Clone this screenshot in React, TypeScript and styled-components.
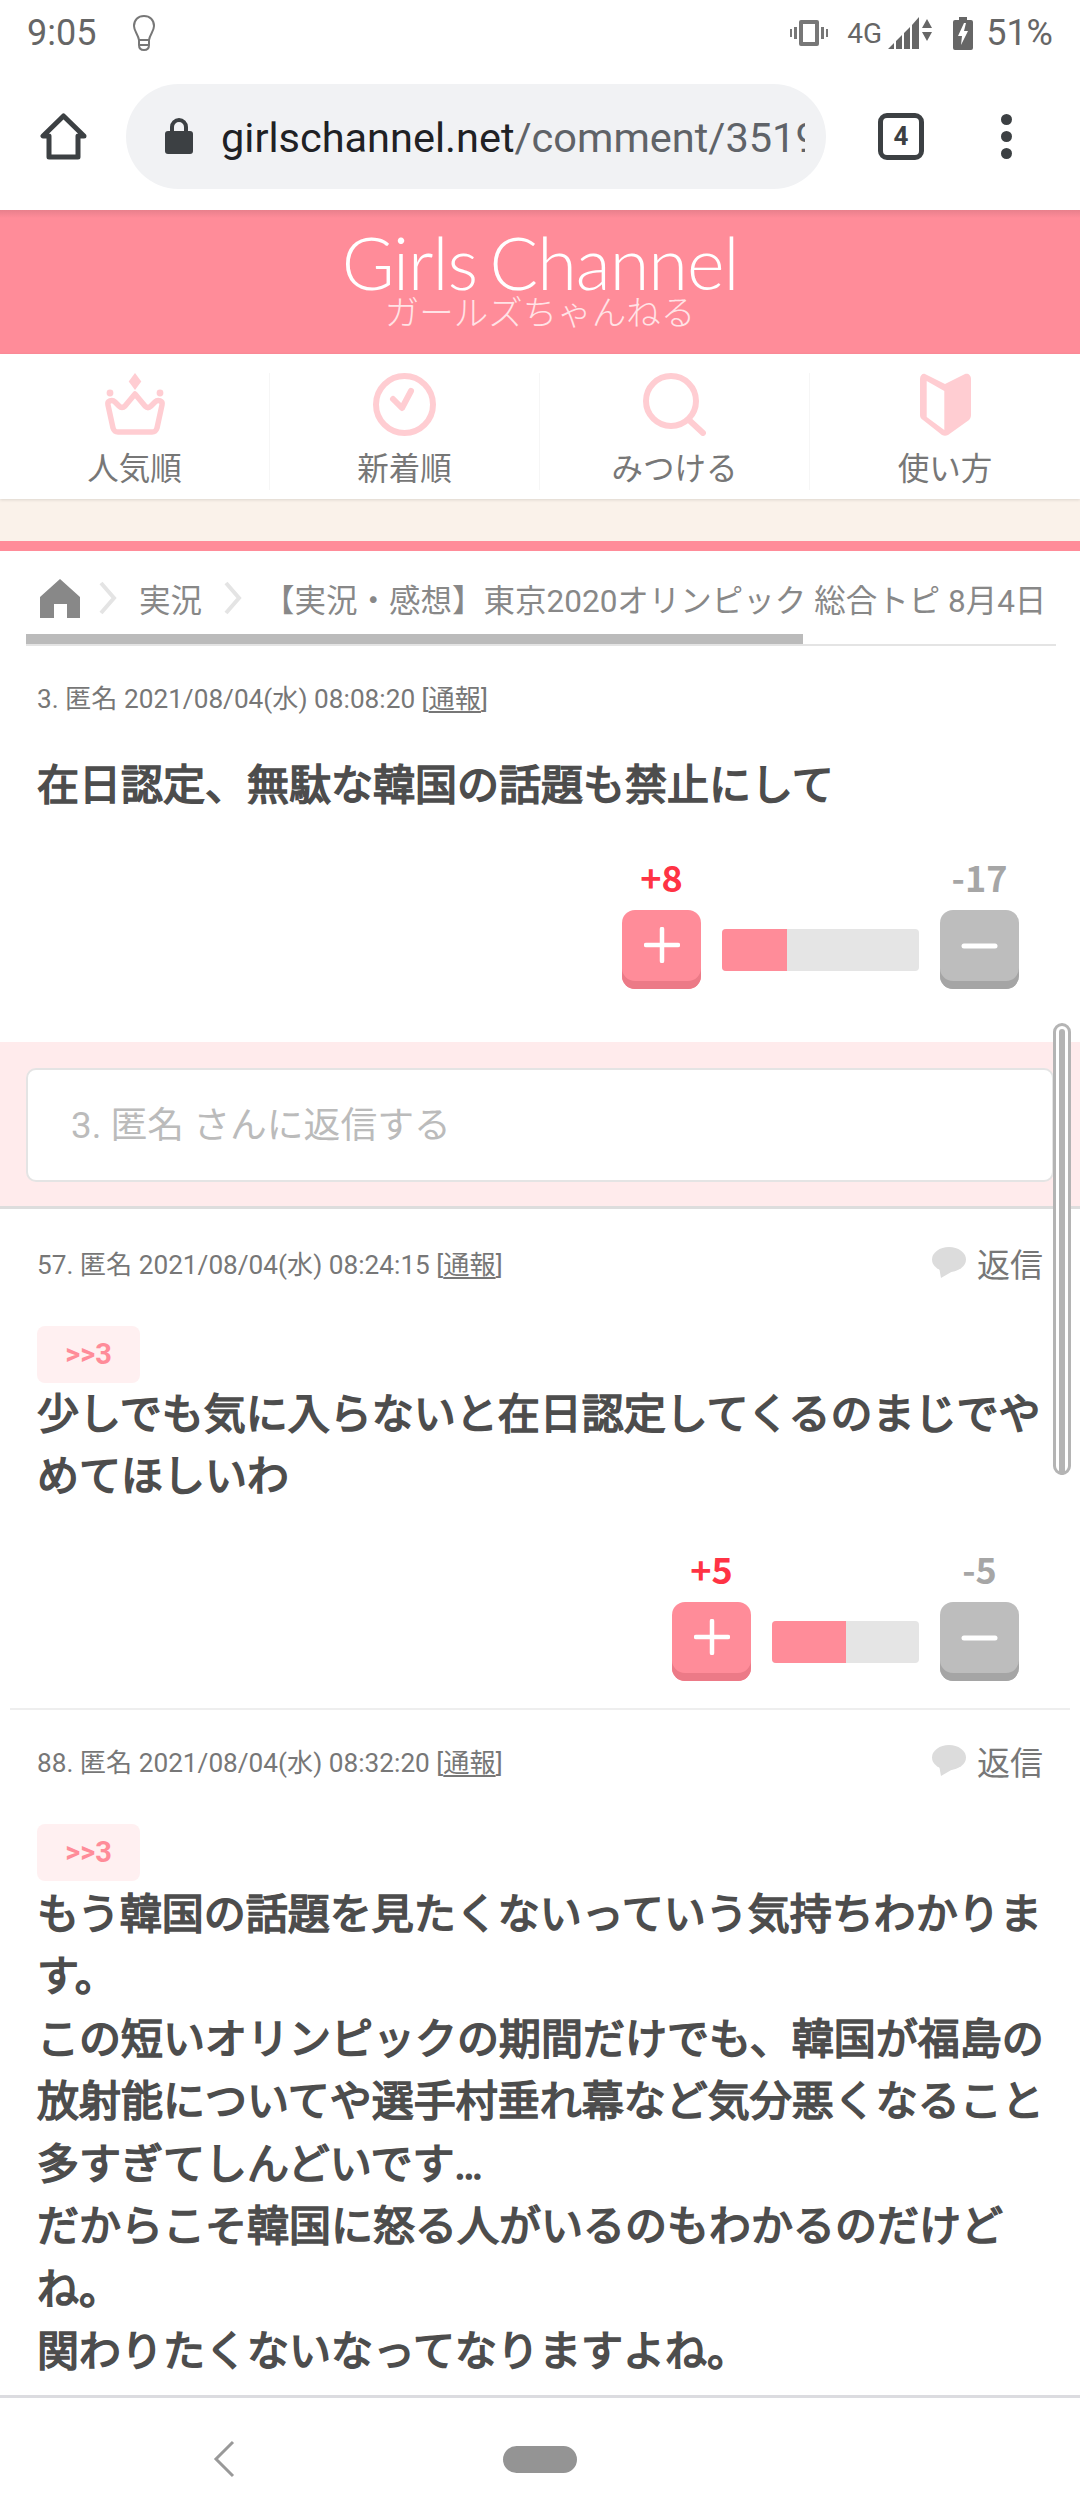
import React from 'react';
import styled, { createGlobalStyle } from 'styled-components';

const GlobalStyle = createGlobalStyle`
  html, body {
    margin: 0;
    padding: 0;
    background: #fff;
  }
  * {
    box-sizing: border-box;
  }
`;

const JP = `Roboto, "Noto Sans CJK JP", "Noto Sans", sans-serif`;
const PINK = '#ff8c99';
const ICON_PINK = '#ffcdd2';

const Shell = styled.div`
  display: flex;
  flex-direction: column;
  width: 1080px;
  height: 2520px;
  overflow: hidden;
  font-family: ${JP};
  background: #fff;
`;

const StatusBar = styled.div`
  display: flex;
  align-items: center;
  justify-content: space-between;
  height: 66px;
  padding: 0 27px 0 27px;
  color: #666;
  font-family: Roboto, sans-serif;
  font-size: 36px;
`;

const StatusGroup = styled.div`
  display: flex;
  align-items: center;
`;

const Clock = styled.span`
  margin-right: 36px;
`;

const Net = styled.span`
  margin: 0 6px 0 19px;
  font-size: 28px;
`;

const Battery = styled.span`
  margin-left: 13px;
`;

const Toolbar = styled.div`
  display: flex;
  align-items: center;
  height: 144px;
  padding: 0 0 4px 40px;
`;

const UrlPill = styled.div`
  display: flex;
  align-items: center;
  width: 700px;
  height: 105px;
  margin-left: 39px;
  padding-left: 39px;
  border-radius: 53px;
  background: #f1f2f4;
  overflow: hidden;
`;

const UrlText = styled.div`
  width: 584px;
  margin-left: 28px;
  padding-top: 3px;
  overflow: hidden;
  white-space: nowrap;
  font-family: Roboto, sans-serif;
  font-size: 41.5px;
  color: #5f6368;
  b {
    font-weight: 400;
    color: #202124;
  }
`;

const TabCount = styled.div`
  display: flex;
  align-items: center;
  justify-content: center;
  width: 46px;
  height: 47px;
  margin-left: 52px;
  border: 5px solid #3c4043;
  border-radius: 9px;
  font-family: Roboto, sans-serif;
  font-size: 26px;
  font-weight: 700;
  color: #3c4043;
`;

const Dots = styled.div`
  display: flex;
  flex-direction: column;
  gap: 6px;
  margin-left: 77px;
  i {
    display: block;
    width: 11px;
    height: 11px;
    border-radius: 50%;
    background: #3c4043;
  }
`;

const Main = styled.div`
  position: relative;
  flex: 1;
  min-height: 0;
  overflow: hidden;
`;

const Logo = styled.div`
  display: flex;
  flex-direction: column;
  align-items: center;
  height: 144px;
  padding-top: 17px;
  background: linear-gradient(#e8808c 0, ${PINK} 8px);
  color: #fff;
`;

const LogoMain = styled.div`
  font-family: Lato, sans-serif;
  font-size: 72px;
  font-weight: 300;
  line-height: 70px;
  letter-spacing: -1px;
  word-spacing: -6px;
`;

const LogoSub = styled.div`
  margin-top: -9px;
  font-family: "Noto Sans CJK JP", sans-serif;
  font-size: 34.5px;
  font-weight: 300;
  line-height: 44px;
  color: #ffe3e6;
`;

const Nav = styled.nav`
  display: grid;
  grid-template-columns: repeat(4, 270px);
  height: 145px;
  padding-top: 19px;
  box-shadow: 0 1px 3px rgba(0, 0, 0, 0.12);
  position: relative;
`;

const NavItem = styled.div<{ $last?: boolean }>`
  display: flex;
  flex-direction: column;
  align-items: center;
  height: 117px;
  border-right: ${(p) => (p.$last ? 'none' : '1px solid #f6f6f6')};
  font-size: 31.5px;
  line-height: 40px;
  color: #777;
  svg {
    display: block;
    flex-shrink: 0;
    margin-bottom: 14px;
  }
`;

const Beige = styled.div`
  height: 42px;
  background: #faf2ea;
`;

const PinkLine = styled.div`
  height: 10px;
  background: ${PINK};
`;

const Crumbs = styled.div`
  display: flex;
  align-items: center;
  height: 83px;
  padding: 11px 0 0 40px;
  white-space: nowrap;
  font-size: 31.5px;
  color: #888;
`;

const CrumbSpacer = styled.span`
  width: 18px;
`;

const CrumbText = styled.span<{ $wide?: boolean }>`
  margin: ${(p) => (p.$wide ? '0 0 0 20px' : '0 21px 0 21px')};
`;

const CrumbScroll = styled.div`
  width: 1030px;
  height: 12px;
  margin-left: 26px;
  border-bottom: 2px solid #e4e4e4;
  div {
    width: 777px;
    height: 10px;
    background: #bbb;
  }
`;

const Item = styled.section<{ $top: number; $bottom: number; $rule?: boolean }>`
  padding: ${(p) => p.$top}px 0 ${(p) => p.$bottom}px;
  margin: 0 10px;
  border-bottom: ${(p) => (p.$rule ? '2px solid #eee' : 'none')};
`;

const MetaRow = styled.div`
  display: flex;
  align-items: center;
  justify-content: space-between;
  height: 36px;
  padding: 0 27px 0 27px;
`;

const Meta = styled.div`
  font-size: 26.2px;
  color: #777;
  white-space: nowrap;
  u {
    text-underline-offset: 3px;
  }
`;

const ReplyLink = styled.div`
  display: flex;
  align-items: center;
  gap: 11px;
  font-size: 33px;
  color: #777;
`;

const Tag = styled.div`
  display: flex;
  align-items: center;
  justify-content: center;
  width: 103px;
  height: 57px;
  margin: 45px 0 0 27px;
  border-radius: 8px;
  background: #fff0f1;
  color: ${PINK};
  font-size: 29px;
  font-weight: 700;
`;

const Body = styled.div<{ $gap: number }>`
  margin-top: ${(p) => p.$gap}px;
  padding: 0 17px 0 27px;
  font-family: "Noto Sans CJK JP", sans-serif;
  font-size: 42px;
  font-weight: 400;
  line-height: 62.5px;
  color: #4d4d4d;
  -webkit-text-stroke: 1.7px #4d4d4d;
`;

const Ellipsis = styled.span`
  font-family: Roboto, sans-serif;
  line-height: 0;
`;

const VoteRow = styled.div<{ $gap: number }>`
  display: flex;
  align-items: flex-end;
  justify-content: flex-end;
  gap: 21px;
  margin-top: ${(p) => p.$gap}px;
  padding-right: 51px;
`;

const VoteCol = styled.div`
  display: flex;
  flex-direction: column;
  align-items: center;
  width: 79px;
`;

const Count = styled.div<{ $plus?: boolean }>`
  height: 40px;
  margin-bottom: 14px;
  font-family: "Noto Sans CJK JP", sans-serif;
  font-size: 36px;
  font-weight: 700;
  line-height: 40px;
  white-space: nowrap;
  color: ${(p) => (p.$plus ? '#ff3344' : '#a6a6a6')};
`;

const VoteBtn = styled.div<{ $plus?: boolean }>`
  display: flex;
  align-items: center;
  justify-content: center;
  width: 79px;
  height: 79px;
  padding-bottom: 8px;
  border-radius: 13px;
  background: ${(p) => (p.$plus ? PINK : '#bdbdbd')};
  box-shadow: inset 0 -8px 0 ${(p) => (p.$plus ? '#ec7a87' : '#a5a5a5')};
`;

const Bar = styled.div<{ $width: number }>`
  width: ${(p) => p.$width}px;
  height: 42px;
  margin-bottom: 18px;
  border-radius: 4px;
  overflow: hidden;
  background: #e5e5e5;
`;

const BarFill = styled.div`
  height: 100%;
  background: ${PINK};
`;

const ReplyBox = styled.div`
  height: 167px;
  padding: 26px 26px 0;
  background: #ffebec;
  border-bottom: 3px solid #ddd;
`;

const ReplyInput = styled.div`
  display: flex;
  align-items: center;
  height: 114px;
  padding: 0 0 6px 43px;
  border: 2px solid #e4e4e4;
  border-radius: 10px;
  background: #fff;
  font-size: 36.8px;
  color: #bbb;
`;

const ScrollThumb = styled.div`
  position: absolute;
  top: 813px;
  right: 9px;
  width: 18px;
  height: 452px;
  border: 3px solid #b4b4b4;
  border-radius: 9px;
  background: #fff;
  &::after {
    content: '';
    display: block;
    width: 6px;
    height: 100%;
    margin: 3px auto 0;
    border-radius: 3px;
    background: #b4b4b4;
  }
`;

const BottomNav = styled.div`
  display: flex;
  align-items: center;
  height: 125px;
  padding: 0 0 0 213px;
  border-top: 3px solid #dcdce0;
  background: #fff;
`;

const HomePill = styled.div`
  width: 74px;
  height: 27px;
  margin-left: 268px;
  border-radius: 14px;
  background: #949494;
`;

const Plus = () => (
  <svg width="36" height="36" viewBox="0 0 36 36">
    <path d="M18 2v32M2 18h32" stroke="#fff" strokeWidth="4.5" strokeLinecap="round" />
  </svg>
);

const Minus = () => (
  <svg width="37" height="36" viewBox="0 0 37 36">
    <path d="M3 19h31" stroke="#fff" strokeWidth="5" strokeLinecap="round" />
  </svg>
);

const Bubble = () => (
  <svg width="34" height="31" viewBox="0 0 34 31">
    <ellipse cx="17" cy="12.5" rx="17" ry="12.5" fill="#dcdcdc" />
    <path d="M7 20l2 11 12-7z" fill="#dcdcdc" />
  </svg>
);

const Crown = () => (
  <svg width="62" height="63" viewBox="0 0 62 63">
    <path d="M31 0l6.3 8.5L31 17l-6.3-8.5z" fill={ICON_PINK} />
    <circle cx="6" cy="20" r="3.4" fill={ICON_PINK} />
    <circle cx="56" cy="20" r="3.4" fill={ICON_PINK} />
    <path
      d="M31 21L41 33C43 35 45 35 47 33L51 29C54 26 59 28 58 32L53 55C52 58 51 59 48 59H14C11 59 10 58 9 55L4 32C3 28 8 26 11 29L15 33C17 35 19 35 21 33Z"
      fill="none"
      stroke={ICON_PINK}
      strokeWidth="5.5"
      strokeLinejoin="round"
    />
  </svg>
);

const ClockIcon = () => (
  <svg width="63" height="63" viewBox="0 0 63 63">
    <circle cx="31.5" cy="31.5" r="28.5" fill="none" stroke={ICON_PINK} strokeWidth="6" />
    <path d="M20 26l9 9 9-17" fill="none" stroke={ICON_PINK} strokeWidth="6" strokeLinecap="round" strokeLinejoin="round" />
  </svg>
);

const Search = () => (
  <svg width="63" height="63" viewBox="0 0 63 63">
    <circle cx="28" cy="28" r="25" fill="none" stroke={ICON_PINK} strokeWidth="6" />
    <path d="M46 47l14 13" stroke={ICON_PINK} strokeWidth="6" strokeLinecap="round" />
  </svg>
);

const Beginner = () => (
  <svg width="51" height="63" viewBox="0 0 51 63">
    <path
      d="M5 1L25 11L45 1C48 0 51 2 51 6V42C51 44 50 46 49 47L28 62C26 63 24 63 22 62L3 47C1 46 0 44 0 42V6C0 2 3 0 5 1Z"
      fill={ICON_PINK}
    />
    <path d="M6.7 8L24.3 18V57L6.7 44Z" fill="#fff" />
  </svg>
);

const HomeCrumb = () => (
  <svg width="40" height="39" viewBox="0 0 40 39">
    <path d="M20 0l20 18v21H27V25H14v14H0V18z" fill="#888" />
  </svg>
);

const Chevron = () => (
  <svg width="20" height="34" viewBox="0 0 20 34">
    <path d="M3 2l13 15L3 32" fill="none" stroke="#e4e4e4" strokeWidth="4" />
  </svg>
);

const Vote = ({ plus, minus, fill, width, gap }: { plus: string; minus: string; fill: number; width: number; gap: number }) => (
  <VoteRow $gap={gap}>
    <VoteCol>
      <Count $plus>{plus}</Count>
      <VoteBtn $plus>
        <Plus />
      </VoteBtn>
    </VoteCol>
    <Bar $width={width}>
      <BarFill style={{ width: `${fill}%` }} />
    </Bar>
    <VoteCol>
      <Count>{minus}</Count>
      <VoteBtn>
        <Minus />
      </VoteBtn>
    </VoteCol>
  </VoteRow>
);

const MetaLine = ({ text, reply }: { text: string; reply?: boolean }) => (
  <MetaRow>
    <Meta>
      {text} [<u>通報</u>]
    </Meta>
    {reply && (
      <ReplyLink>
        <Bubble />
        返信
      </ReplyLink>
    )}
  </MetaRow>
);

const App = () => {
  return (
    <Shell>
      <GlobalStyle />
      <StatusBar>
        <StatusGroup>
          <Clock>9:05</Clock>
          <svg width="24" height="38" viewBox="0 0 24 38" fill="none" stroke="#777" strokeWidth="2">
            <path d="M12 2C6 2 2 6 2 12c0 5 4 8 5 14h10c1-6 5-9 5-14 0-6-4-10-10-10z" />
            <path d="M7 26v5c0 4 2 5 5 5s5-1 5-5v-5M7 31h10" />
          </svg>
        </StatusGroup>
        <StatusGroup>
          <svg width="38" height="26" viewBox="0 0 38 26" fill="#777">
            <path d="M11 0h16a2 2 0 012 2v22a2 2 0 01-2 2H11a2 2 0 01-2-2V2a2 2 0 012-2zm2 4v18h12V4z" fillRule="evenodd" />
            <path d="M4 7h3v12H4zM0 9h2v8H0zM31 7h3v12h-3zM36 9h2v8h-2z" />
          </svg>
          <Net>4G</Net>
          <svg width="45" height="32" viewBox="0 0 45 32" fill="#666">
            <path d="M0 32l6-6v6zM8 24l6-6v14H8zM16 16l6-6v22h-6zM24 8l7-8v32h-7z" />
            <path d="M34 11l5-9 5 9zM34 15h10l-5 9z" />
          </svg>
          <svg width="20" height="33" viewBox="0 0 20 33" style={{ marginLeft: 20 }}>
            <path d="M6 0h8v3h4a2 2 0 012 2v26a2 2 0 01-2 2H2a2 2 0 01-2-2V5a2 2 0 012-2h4z" fill="#666" />
            <path d="M11 6l-6 13h4l-1 9 7-14h-4l2-8z" fill="#fff" />
          </svg>
          <Battery>51%</Battery>
        </StatusGroup>
      </StatusBar>
      <Toolbar>
        <svg width="47" height="47" viewBox="0 0 47 47" fill="none" stroke="#3c4043" strokeWidth="5" strokeLinejoin="round">
          <path d="M23.5 3L3 23h6v21h29V23h6z" />
        </svg>
        <UrlPill>
          <svg width="28" height="36" viewBox="0 0 28 36">
            <path d="M7 15V9a7 7 0 0114 0v6" fill="none" stroke="#3c4043" strokeWidth="4" />
            <rect x="0" y="13" width="28" height="23" rx="3" fill="#3c4043" />
          </svg>
          <UrlText>
            <b>girlschannel.net</b>/comment/3519
          </UrlText>
        </UrlPill>
        <TabCount>4</TabCount>
        <Dots>
          <i />
          <i />
          <i />
        </Dots>
      </Toolbar>
      <Main>
        <Logo>
          <LogoMain>Girls Channel</LogoMain>
          <LogoSub>ガールズちゃんねる</LogoSub>
        </Logo>
        <Nav>
          <NavItem>
            <Crown />
            人気順
          </NavItem>
          <NavItem>
            <ClockIcon />
            新着順
          </NavItem>
          <NavItem>
            <Search />
            みつける
          </NavItem>
          <NavItem $last>
            <Beginner />
            使い方
          </NavItem>
        </Nav>
        <Beige />
        <PinkLine />
        <Crumbs>
          <HomeCrumb />
          <CrumbSpacer />
          <Chevron />
          <CrumbText>実況</CrumbText>
          <Chevron />
          <CrumbText $wide>【実況・感想】東京2020オリンピック 総合トピ 8月4日</CrumbText>
        </Crumbs>
        <CrumbScroll>
          <div />
        </CrumbScroll>

        <Item $top={33} $bottom={53}>
          <MetaLine text="3. 匿名 2021/08/04(水) 08:08:20" />
          <Body $gap={36}>在日認定、無駄な韓国の話題も禁止にして</Body>
          <Vote plus="+8" minus="-17" fill={33} width={197} gap={42} />
        </Item>

        <ReplyBox>
          <ReplyInput>3. 匿名 さんに返信する</ReplyInput>
        </ReplyBox>

        <Item $top={36} $bottom={27} $rule>
          <MetaLine text="57. 匿名 2021/08/04(水) 08:24:15" reply />
          <Tag>&gt;&gt;3</Tag>
          <Body $gap={-3}>少しでも気に入らないと在日認定してくるのまじでやめてほしいわ</Body>
          <Vote plus="+5" minus="-5" fill={50} width={147} gap={43} />
        </Item>

        <Item $top={33} $bottom={0}>
          <MetaLine text="88. 匿名 2021/08/04(水) 08:32:20" reply />
          <Tag>&gt;&gt;3</Tag>
          <Body $gap={-1}>
            もう韓国の話題を見たくないっていう気持ちわかります。
            <br />
            この短いオリンピックの期間だけでも、韓国が福島の放射能についてや選手村垂れ幕など気分悪くなること多すぎてしんどいです<Ellipsis>…</Ellipsis>
            <br />
            だからこそ韓国に怒る人がいるのもわかるのだけどね。
            <br />
            関わりたくないなってなりますよね。
          </Body>
        </Item>
        <ScrollThumb />
      </Main>
      <BottomNav>
        <svg width="22" height="38" viewBox="0 0 22 38">
          <path d="M20 2L3 19l17 17" fill="none" stroke="#999" strokeWidth="3" />
        </svg>
        <HomePill />
      </BottomNav>
    </Shell>
  );
};

export default App;
